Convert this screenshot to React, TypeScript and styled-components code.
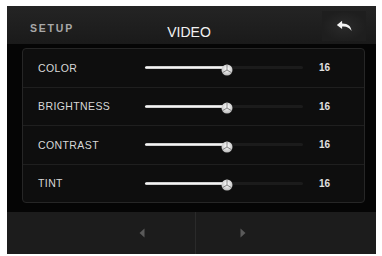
import React from "react";
import styled, { createGlobalStyle } from "styled-components";

const Global = createGlobalStyle`
  html, body { margin: 0; padding: 0; background: #ffffff; }
  body { width: 382px; height: 256px; overflow: hidden; font-family: "Liberation Sans", Arial, sans-serif; }
`;

const Page = styled.div`
  padding: 6px 6px 2px 7px;
  width: 382px;
  height: 256px;
  box-sizing: border-box;
`;

const Screen = styled.div`
  width: 369px;
  height: 248px;
  background: #050505;
  display: flex;
  flex-direction: column;
`;

const Header = styled.div`
  height: 38px;
  background: linear-gradient(#242424, #1a1a1a);
  display: grid;
  grid-template-columns: 1fr auto 1fr;
  align-items: center;
  padding: 0 10px 0 23px;
`;

const Setup = styled.div`
  color: #a8a8a8;
  font-size: 10.5px;
  font-weight: bold;
  letter-spacing: 1.8px;
  margin-top: 5px;
`;

const Title = styled.div`
  color: #f2f2f2;
  font-size: 14px;
  margin-top: 14px;
  margin-right: 18px;
`;

const BackBtn = styled.div`
  justify-self: end;
  width: 44px;
  height: 30px;
  margin-top: 2px;
  display: flex;
  align-items: center;
  justify-content: center;
  background: radial-gradient(ellipse at center, #2a2a2a 0%, #1e1e1e 70%);
`;

const Panel = styled.div`
  margin: 4px 11px 0 15px;
  height: 155px;
  box-sizing: border-box;
  border: 1px solid #262626;
  border-radius: 4px;
  background: #0e0e0e;
  display: flex;
  flex-direction: column;
`;

const Row = styled.div<{ $last?: boolean }>`
  flex: 1;
  display: grid;
  grid-template-columns: 107px 166px 1fr;
  align-items: center;
  padding-left: 15px;
  border-bottom: ${(p) => (p.$last ? "none" : "1px solid #1f1f1f")};
`;

const Label = styled.div`
  color: #d8d8d8;
  font-size: 10.5px;
  letter-spacing: 0.4px;
`;

const Track = styled.div`
  position: relative;
  height: 10px;
  display: flex;
  align-items: center;
`;

const Rail = styled.div`
  width: 158px;
  height: 3px;
  border-radius: 2px;
  background: #1b1b1b;
  position: relative;
`;

const Fill = styled.div`
  position: absolute;
  left: 0;
  top: 0;
  bottom: 0;
  border-radius: 2px;
  background: linear-gradient(#bdbdbd, #f4f4f4, #bdbdbd);
`;

const Knob = styled.div`
  position: absolute;
  top: 50%;
  width: 12px;
  height: 12px;
  margin-left: -6px;
  margin-top: -6px;
`;

const Value = styled.div`
  color: #e0e0e0;
  font-size: 10px;
  font-weight: bold;
  padding-left: 8px;
`;

const Footer = styled.div`
  margin-top: 9px;
  flex: 1;
  display: grid;
  grid-template-columns: 188px 1fr;
  gap: 1px;
  background: #2a2a2a;
`;

const NavBtn = styled.div<{ $align: "end" | "start" }>`
  background: #1c1c1c;
  display: flex;
  align-items: center;
  justify-content: ${(p) => (p.$align === "end" ? "flex-end" : "flex-start")};
  padding: ${(p) => (p.$align === "end" ? "0 50px 0 0" : "0 0 0 44px")};
`;

const KnobIcon = () => (
  <svg width="12" height="12" viewBox="0 0 12 12">
    <defs>
      <radialGradient id="kg" cx="50%" cy="40%" r="60%">
        <stop offset="0%" stopColor="#ffffff" />
        <stop offset="100%" stopColor="#bcbcbc" />
      </radialGradient>
    </defs>
    <circle cx="6" cy="6" r="5.5" fill="url(#kg)" />
    <path d="M6 6 L6 0.5 M6 6 L1.3 8.8 M6 6 L10.7 8.8" stroke="#7a7a7a" strokeWidth="0.9" />
  </svg>
);

const settings = [
  { name: "COLOR", value: 16 },
  { name: "BRIGHTNESS", value: 16 },
  { name: "CONTRAST", value: 16 },
  { name: "TINT", value: 16 },
];

export default function App() {
  return (
    <>
      <Global />
      <Page>
        <Screen>
          <Header>
            <Setup>SETUP</Setup>
            <Title>VIDEO</Title>
            <BackBtn>
              <svg width="17" height="12" viewBox="0 0 14 10">
                <path d="M5 0.6 L0.6 4.2 L5 7.6 L5 5.4 C8.5 5 11 6.2 12.9 9.2 C12.5 5.2 9.8 2.8 5 2.9 Z" fill="#f4f4f4" />
              </svg>
            </BackBtn>
          </Header>
          <Panel>
            {settings.map((s, i) => {
              const pct = 52;
              return (
                <Row key={s.name} $last={i === settings.length - 1}>
                  <Label>{s.name}</Label>
                  <Track>
                    <Rail>
                      <Fill style={{ width: `${pct}%` }} />
                      <Knob style={{ left: `${pct}%` }}>
                        <KnobIcon />
                      </Knob>
                    </Rail>
                  </Track>
                  <Value>{s.value}</Value>
                </Row>
              );
            })}
          </Panel>
          <Footer>
            <NavBtn $align="end">
              <svg width="6" height="10" viewBox="0 0 6 10">
                <path d="M5.5 0.5 L0.5 5 L5.5 9.5 Z" fill="#5a5a5a" />
              </svg>
            </NavBtn>
            <NavBtn $align="start">
              <svg width="6" height="10" viewBox="0 0 6 10">
                <path d="M0.5 0.5 L5.5 5 L0.5 9.5 Z" fill="#5a5a5a" />
              </svg>
            </NavBtn>
          </Footer>
        </Screen>
      </Page>
    </>
  );
}
